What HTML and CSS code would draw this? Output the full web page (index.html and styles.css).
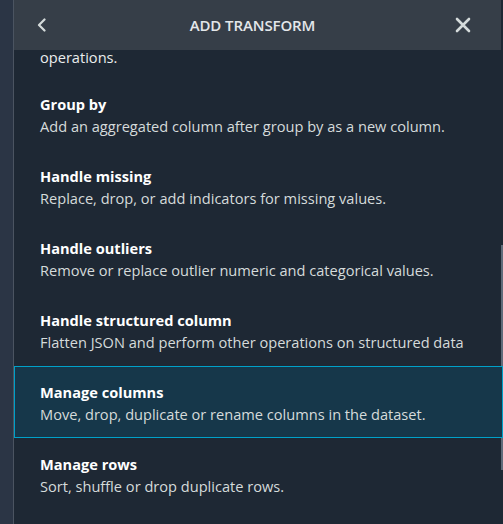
FILE: index.html
```html
<!DOCTYPE html>
<html>
<head>
<meta charset="utf-8">
<link rel="stylesheet" href="styles.css">
</head>
<body>
<div class="app">
  <div class="rail"></div>
  <div class="panel">
    <div class="header">
      <button class="icon-btn back" aria-label="Back">
        <svg width="12" height="14" viewBox="0 0 12 14"><path d="M8.5 1.5 L3 7 L8.5 12.5" fill="none" stroke="#d5dbdb" stroke-width="2.2" stroke-linecap="round" stroke-linejoin="round"/></svg>
      </button>
      <div class="title">ADD TRANSFORM</div>
      <button class="icon-btn close" aria-label="Close">
        <svg width="16" height="16" viewBox="0 0 16 16"><path d="M2 2 L14 14 M14 2 L2 14" fill="none" stroke="#d5dbdb" stroke-width="2.6" stroke-linecap="round"/></svg>
      </button>
    </div>
    <div class="list">
      <div class="item first">
        <div class="item-desc">operations.</div>
      </div>
      <div class="item">
        <div class="item-title">Group by</div>
        <div class="item-desc">Add an aggregated column after group by as a new column.</div>
      </div>
      <div class="item">
        <div class="item-title">Handle missing</div>
        <div class="item-desc">Replace, drop, or add indicators for missing values.</div>
      </div>
      <div class="item">
        <div class="item-title">Handle outliers</div>
        <div class="item-desc">Remove or replace outlier numeric and categorical values.</div>
      </div>
      <div class="item">
        <div class="item-title">Handle structured column</div>
        <div class="item-desc">Flatten JSON and perform other operations on structured data</div>
      </div>
      <div class="item selected">
        <div class="item-title">Manage columns</div>
        <div class="item-desc">Move, drop, duplicate or rename columns in the dataset.</div>
      </div>
      <div class="item">
        <div class="item-title">Manage rows</div>
        <div class="item-desc">Sort, shuffle or drop duplicate rows.</div>
      </div>
    </div>
    <div class="thumb"></div>
  </div>
</div>
</body>
</html>
```

FILE: styles.css
```css
* { box-sizing: border-box; }
html, body { margin: 0; padding: 0; }
body {
  width: 503px;
  height: 524px;
  overflow: hidden;
  background: #1e2733;
  font-family: "Open Sans", "Noto Sans", sans-serif;
}
.app {
  display: flex;
  height: 524px;
}
.rail {
  flex: none;
  width: 14px;
  background: #2b3545;
  border-right: 1px solid #4b5461;
}
.panel {
  position: relative;
  flex: 1;
  display: flex;
  flex-direction: column;
  background: #1e2834;
  overflow: hidden;
}
.header {
  position: relative;
  z-index: 2;
  height: 50px;
  flex: none;
  display: flex;
  align-items: center;
  justify-content: space-between;
  padding: 0 28px 0 20px;
  margin-right: 2px;
  background: #363e48;
}
.icon-btn {
  background: none;
  border: 0;
  padding: 0;
  width: 20px;
  height: 20px;
  display: flex;
  align-items: center;
  justify-content: center;
  cursor: pointer;
}
.back { margin-left: -2px; }
.title {
  color: #e4e7ea;
  font-size: 15px;
  font-weight: 600;
  letter-spacing: -0.1px;
}
.list {
  position: relative;
  z-index: 1;
  flex: 1;
}
.item {
  border: 1px solid transparent;
  padding: 14px 26px 12px 25px;
}
.item.first {
  border: 0;
  margin-top: -4px;
  padding: 0 26px 10px 26px;
}
.item.first .item-desc {
  color: #eaeded;
}
.item-title {
  color: #ffffff;
  font-size: 14.6px;
  font-weight: 700;
  line-height: 22px;
}
.item-desc {
  color: #d5dbdb;
  font-size: 14.6px;
  line-height: 22px;
}
.item.selected {
  background: #16374a;
  border-color: #00a1c9;
}
.thumb {
  position: absolute;
  right: 0;
  top: 245px;
  width: 2px;
  height: 225px;
  background: #5f6b7a;
}
```
